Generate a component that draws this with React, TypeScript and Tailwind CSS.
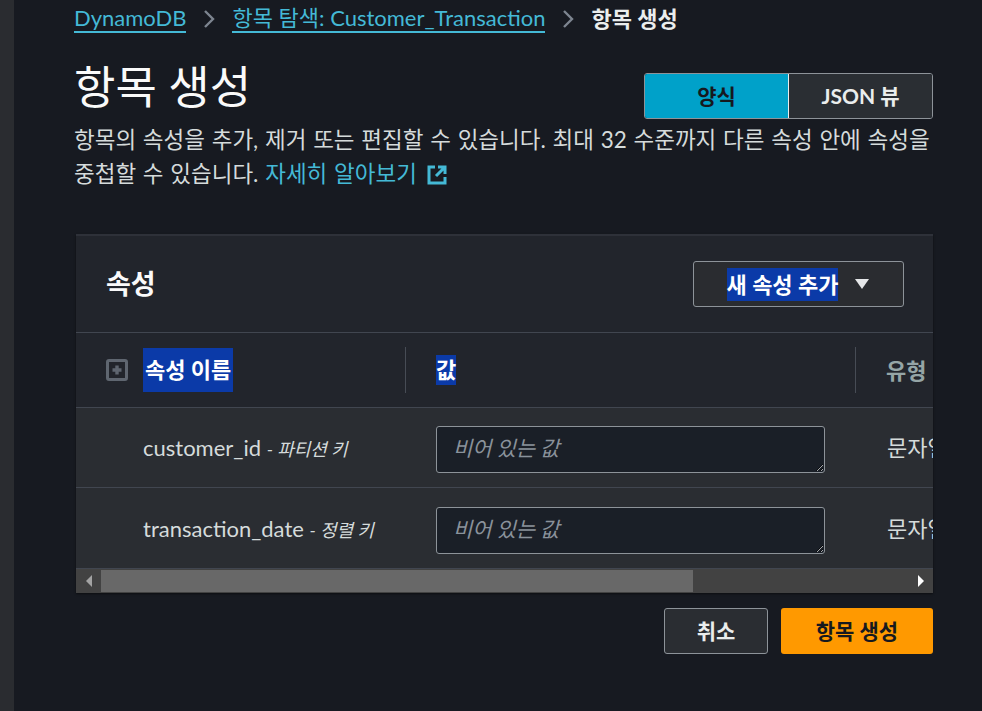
import React from "react";

function Chevron() {
  return (
    <svg width="14" height="20" viewBox="0 0 14 20" className="mx-[16px]">
      <path d="M3 2l8 8-8 8" fill="none" stroke="#7d8590" strokeWidth="2.4" />
    </svg>
  );
}

function ExternalIcon() {
  return (
    <svg width="22" height="22" viewBox="0 0 22 22" className="ml-[9px] inline-block align-[-4px]">
      <path d="M9 3H3v16h16v-6" fill="none" stroke="#44b9d6" strokeWidth="3" />
      <path d="M12 3h7v7M19 3l-9 9" fill="none" stroke="#44b9d6" strokeWidth="3" />
    </svg>
  );
}

function PlusBox() {
  return (
    <svg width="22" height="22" viewBox="0 0 22 22">
      <rect x="1.5" y="1.5" width="19" height="19" rx="1.5" fill="#22252c" stroke="#5f6670" strokeWidth="3" />
      <path d="M11 6.5v9M6.5 11h9" stroke="#5f6670" strokeWidth="3.4" />
    </svg>
  );
}

function AttrRow({ name, keyLabel, h }: { name: string; keyLabel: string; h: string }) {
  return (
    <div className={`grid grid-cols-[329px_450px_200px] ${h} items-center border-b border-[#414650] bg-[#2a2d32]`}>
      <div className="pl-[67px] text-[22px] text-[#d5dbdb] whitespace-nowrap">
        {name} <span className="text-[18px] italic text-[#d5dbdb]">- {keyLabel}</span>
      </div>
      <div className="pl-[31px] pt-[4px]">
        <textarea
          placeholder="비어 있는 값"
          className="block w-[389px] h-[47px] rounded-[3px] border border-[#8d9399] bg-[#1a1f27] px-4 py-[5px] text-[21px] italic leading-[32px] text-[#d5dbdb] placeholder:text-[#8a929b] outline-none"
        />
      </div>
      <div className="pl-[32px] text-[22px] text-[#d5dbdb] whitespace-nowrap">문자열</div>
    </div>
  );
}

export default function App() {
  return (
    <div className="flex min-h-[711px] bg-[#171a21] font-['Lato','Noto_Sans_CJK_KR',sans-serif] text-[#d5dbdb]">
      <div className="w-[14px] shrink-0 bg-[#2a2c30]" />
      <div className="w-[859px] ml-[60px]">
        {/* breadcrumbs */}
        <div className="flex items-center h-[38px] text-[22px]">
          <a className="text-[#44b9d6] border-b-2 border-[#44b9d6] leading-[26px]">DynamoDB</a>
          <Chevron />
          <a className="text-[#44b9d6] border-b-2 border-[#44b9d6] leading-[26px]">항목 탐색: Customer_Transaction</a>
          <Chevron />
          <span className="font-bold text-[#eaeded] leading-[26px]">항목 생성</span>
        </div>

        {/* title */}
        <div className="flex items-start justify-between mt-[20px]">
          <h1 className="text-[45px] leading-[62px] text-[#fafafa] -mt-[2px]">항목 생성</h1>
          <div className="flex h-[46px] rounded-[3px] border border-[#8d9399] overflow-hidden mt-[15px] text-[21px] font-bold">
            <div className="w-[144px] flex items-center justify-center bg-[#00a1c9] text-[#16191f] border-r border-[#eaeded]">양식</div>
            <div className="w-[143px] flex items-center justify-center bg-[#2a2e33] text-[#eaeded]">JSON 뷰</div>
          </div>
        </div>
        <p className="text-[22.5px] leading-[34px] [word-spacing:1px] text-[#d5dbdb] mt-[4px]">
          항목의 속성을 추가, 제거 또는 편집할 수 있습니다. 최대 32 수준까지 다른 속성 안에 속성을 중첩할 수 있습니다.{" "}
          <a className="text-[#44b9d6]">자세히 알아보기</a>
          <ExternalIcon />
        </p>

        {/* card */}
        <div className="mt-[43px] ml-[2px] bg-[#22252c] border-t-2 border-[#2e3139] shadow-[0_1px_2px_rgba(0,0,0,0.5)] overflow-hidden">
          <div className="flex items-center justify-between h-[97px] px-[30px] border-b border-[#414650]">
            <h2 className="text-[27px] font-bold text-[#fafafa]">속성</h2>
            <button className="flex items-center justify-center gap-[16px] w-[211px] h-[46px] rounded-[3px] border border-[#8d9399] bg-[#2a2c30] text-[22px] font-bold text-white -mr-[1px]">
              <span className="bg-[#0b3aa8] leading-[33px]">새 속성 추가</span>
              <svg width="16" height="12" viewBox="0 0 16 12">
                <path d="M1 1h14L8 11z" fill="#e5e7e9" />
              </svg>
            </button>
          </div>

          <div className="grid grid-cols-[329px_450px_200px] h-[75px] items-center border-b border-[#414650]">
            <div className="flex items-center pl-[30px] gap-[15px]">
              <PlusBox />
              <span className="bg-[#0b3aa8] text-white font-bold text-[22px] leading-[44px] px-[2px]">속성 이름</span>
            </div>
            <div className="h-[46px] flex items-center border-l border-[#474c55] pl-[30px]">
              <span className="bg-[#0b3aa8] text-white font-bold text-[22px] leading-[30px]">값</span>
            </div>
            <div className="h-[46px] flex items-center border-l border-[#474c55] pl-[30px] text-[22px] font-bold text-[#95a5a6]">유형</div>
          </div>

          <AttrRow name="customer_id" keyLabel="파티션 키" h="h-[80px]" />
          <AttrRow name="transaction_date" keyLabel="정렬 키" h="h-[81px]" />

          {/* horizontal scrollbar */}
          <div className="flex items-center h-[24px] bg-[#424242]">
            <div className="w-[25px] flex justify-center">
              <svg width="8" height="12" viewBox="0 0 8 12"><path d="M7 0v12L1 6z" fill="#a3a3a3" /></svg>
            </div>
            <div className="w-[592px] h-[22px] bg-[#686868]" />
            <div className="flex-1" />
            <div className="w-[24px] flex justify-center">
              <svg width="8" height="12" viewBox="0 0 8 12"><path d="M1 0v12l6-6z" fill="#ffffff" /></svg>
            </div>
          </div>
        </div>

        {/* actions */}
        <div className="flex justify-end gap-[13px] mt-[15px]">
          <button className="w-[104px] h-[46px] rounded-[3px] border border-[#8d9399] bg-[#2a2d32] text-[21px] font-bold text-[#eaeded]">취소</button>
          <button className="w-[152px] h-[46px] rounded-[3px] bg-[#ff9900] text-[21px] font-bold text-[#16191f]">항목 생성</button>
        </div>
      </div>
    </div>
  );
}
